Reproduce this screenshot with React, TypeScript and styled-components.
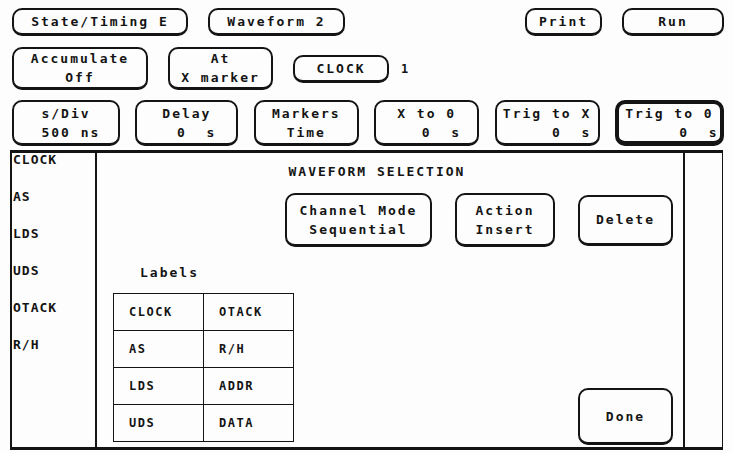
import React, {FC} from 'react';
import styled, {createGlobalStyle} from "styled-components";

interface IKey {
    lines: string[]
    width: number
    height?: number
    heavy?: boolean
}

const topKeys: IKey[] = [
    {lines: ['s/Div', ' 500 ns'], width: 108},
    {lines: ['Delay', '  0  s'], width: 103},
    {lines: ['Markers', 'Time'], width: 105},
    {lines: ['X to 0', '   0  s'], width: 105},
    {lines: ['Trig to X', '     0  s'], width: 105},
    {lines: ['Trig to 0', '      0  s'], width: 109, heavy: true},
]

const traces = ['CLOCK', 'AS', 'LDS', 'UDS', 'OTACK', 'R/H']

const labelCells = [
    ['CLOCK', 'OTACK'],
    ['AS', 'R/H'],
    ['LDS', 'ADDR'],
    ['UDS', 'DATA'],
]

const Key: FC<IKey> = ({lines, width, height, heavy}) => (
    <KeyBox width={width} height={height} heavy={heavy}>
        {lines.map((l, i) => <KeyLine key={i}>{l}</KeyLine>)}
    </KeyBox>
)

const App: FC = () => {
    return (
        <>
            <GlobalStyle/>
            <Screen>
                <Row top={8} height={28}>
                    <Key lines={['State/Timing E']} width={176} height={28}/>
                    <Key lines={['Waveform 2']} width={137} height={28}/>
                    <Spacer/>
                    <Key lines={['Print']} width={77} height={28}/>
                    <Key lines={['Run']} width={102} height={28}/>
                </Row>
                <Row top={11} height={43}>
                    <Key lines={['Accumulate', 'Off']} width={136}/>
                    <Key lines={['At', 'X marker']} width={105}/>
                    <Key lines={['CLOCK']} width={96} height={28}/>
                    <Index>1</Index>
                </Row>
                <Row top={10} height={46} spread>
                    {topKeys.map(k => <Key key={k.lines[0]} {...k}/>)}
                </Row>
                <Main>
                    <TraceColumn>
                        {traces.map(t => <Trace key={t}>{t}</Trace>)}
                    </TraceColumn>
                    <Dialog>
                        <DialogTitle>WAVEFORM SELECTION</DialogTitle>
                        <DialogKeys>
                            <Key lines={['Channel Mode', 'Sequential']} width={147} height={54}/>
                            <Key lines={['Action', 'Insert']} width={100} height={54}/>
                            <Key lines={['Delete']} width={95} height={51}/>
                        </DialogKeys>
                        <DialogBottom>
                            <LabelsBlock>
                                <LabelsCaption>Labels</LabelsCaption>
                                <LabelsTable>
                                    {labelCells.flat().map(c => <LabelCell key={c}>{c}</LabelCell>)}
                                </LabelsTable>
                            </LabelsBlock>
                            <Key lines={['Done']} width={95} height={57}/>
                        </DialogBottom>
                    </Dialog>
                    <RightStrip/>
                </Main>
            </Screen>
        </>
    )
}

export default App;

const GlobalStyle = createGlobalStyle`
  body {
    margin: 0;
    background: #fdfdfd;
  }
`

const Screen = styled.div`
  width: 733px;
  height: 453px;
  overflow: hidden;
  background: #fdfdfd;
  color: #141414;
  font-family: "DejaVu Sans Mono", "Liberation Mono", monospace;
  font-weight: 700;
  font-size: 13px;
  letter-spacing: 2px;
`

const Row = styled.div<{ top: number, height: number, spread?: boolean }>`
  display: flex;
  align-items: center;
  gap: ${({spread}) => spread ? '0' : '20px'};
  justify-content: ${({spread}) => spread ? 'space-between' : 'flex-start'};
  height: ${({height}) => height}px;
  margin-top: ${({top}) => top}px;
  padding: 0 9px 0 12px;
`

const Spacer = styled.div`
  flex: 1;
`

const KeyBox = styled.div<{ width: number, height?: number, heavy?: boolean }>`
  box-sizing: border-box;
  width: ${({width}) => width}px;
  height: ${({height}) => height ? height + 'px' : '100%'};
  flex-shrink: 0;
  border: ${({heavy}) => heavy ? '4px' : '2px'} solid #141414;
  border-bottom-width: ${({heavy}) => heavy ? '5px' : '3px'};
  border-radius: 10px;
  display: flex;
  flex-direction: column;
  align-items: center;
  justify-content: center;
  gap: 4px;
`

const KeyLine = styled.div`
  white-space: pre;
  line-height: 15px;
`

const Index = styled.div`
  margin-left: -8px;
  font-size: 12px;
`

const Main = styled.div`
  box-sizing: border-box;
  display: flex;
  width: 713px;
  height: 300px;
  margin: 4px 0 0 10px;
  border-top: 3px solid #141414;
  border-bottom: 3px solid #141414;
  border-left: 2px solid #141414;
  border-right: 1px solid #141414;
`

const TraceColumn = styled.div`
  width: 83px;
  display: flex;
  flex-direction: column;
  gap: 17px;
  margin-top: -3px;
`

const Trace = styled.div`
  line-height: 20px;
  letter-spacing: 1px;
  padding-left: 1px;
`

const Dialog = styled.div`
  box-sizing: border-box;
  width: 590px;
  border-left: 2px solid #141414;
  border-right: 2px solid #141414;
  display: flex;
  flex-direction: column;
  padding: 11px 10px 2px 16px;
`

const DialogTitle = styled.div`
  text-align: center;
  line-height: 16px;
  padding-right: 32px;
`

const DialogKeys = styled.div`
  display: flex;
  align-items: center;
  justify-content: flex-end;
  gap: 23px;
  margin-top: 13px;
`

const DialogBottom = styled.div`
  flex: 1;
  display: flex;
  justify-content: space-between;
  align-items: flex-end;
`

const LabelsBlock = styled.div`
  display: flex;
  flex-direction: column;
  margin-bottom: 3px;
`

const LabelsCaption = styled.div`
  padding-left: 27px;
  line-height: 16px;
  margin-bottom: 12px;
`

const LabelsTable = styled.div`
  display: grid;
  grid-template-columns: 90px 90px;
  grid-auto-rows: 37px;
  border: 1px solid #141414;
  border-width: 1px 0 0 1px;
`

const LabelCell = styled.div`
  display: flex;
  align-items: center;
  padding-left: 15px;
  border-right: 1px solid #141414;
  border-bottom: 1px solid #141414;
  font-size: 12px;
  letter-spacing: 1.5px;
`

const RightStrip = styled.div`
  flex: 1;
`
